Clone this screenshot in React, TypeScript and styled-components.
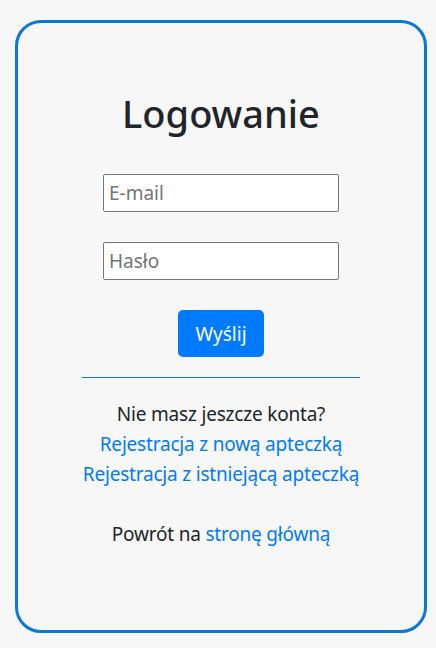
import * as React from 'react';
import styled, { createGlobalStyle } from 'styled-components';

const GlobalStyle = createGlobalStyle`
    html, body {
        margin: 0;
        padding: 0;
        background: #f7f7f7;
    }
    body {
        font-family: "Noto Sans", "Open Sans", sans-serif;
        color: #212529;
    }
`;

const Page = styled.div`
    padding: 20px 9px 15px 15px;
`;

const Card = styled.div`
    box-sizing: border-box;
    height: 613px;
    border: 3px solid #0a78d8;
    border-radius: 26px;
    background: #f7f7f7;
    display: flex;
    flex-direction: column;
    align-items: center;
    padding-top: 67px;
`;

const Title = styled.h1`
    margin: 0 0 38px;
    font-size: 38px;
    line-height: 46px;
    font-weight: 500;
    color: #212529;
`;

const Form = styled.form`
    display: flex;
    flex-direction: column;
    align-items: center;
    gap: 30px;
`;

const Input = styled.input`
    box-sizing: border-box;
    width: 236px;
    height: 38px;
    padding: 0 5px;
    border: 1px solid #767676;
    border-radius: 2px;
    background: #fff;
    font-family: inherit;
    font-size: 19px;
    color: #212529;

    &::placeholder {
        color: #757575;
    }
`;

const Button = styled.button`
    box-sizing: border-box;
    height: 47px;
    padding: 0 17px;
    border: none;
    border-radius: 5px;
    background: #007bff;
    color: #fff;
    font-family: inherit;
    font-size: 19px;
    cursor: pointer;
`;

const Divider = styled.div`
    width: 278px;
    height: 1px;
    margin: 20px 0 21px;
    background: #1f74c4;
`;

const Links = styled.div`
    display: flex;
    flex-direction: column;
    align-items: center;
    font-size: 19px;
    letter-spacing: -0.2px;
    line-height: 30px;
`;

const Line = styled.div<{ spaced?: boolean }>`
    margin-top: ${props => (props.spaced ? '30px' : '0')};
`;

const Link = styled.a`
    color: #007bff;
    text-decoration: none;
`;

export default function App() {
    return (
        <Page>
            <GlobalStyle />
            <Card>
                <Title>Logowanie</Title>
                <Form onSubmit={e => e.preventDefault()}>
                    <Input type="email" placeholder="E-mail" />
                    <Input type="password" placeholder="Hasło" />
                    <Button type="submit">Wyślij</Button>
                </Form>
                <Divider />
                <Links>
                    <Line>Nie masz jeszcze konta?</Line>
                    <Line><Link href="#">Rejestracja z nową apteczką</Link></Line>
                    <Line><Link href="#">Rejestracja z istniejącą apteczką</Link></Line>
                    <Line spaced>Powrót na <Link href="#">stronę główną</Link></Line>
                </Links>
            </Card>
        </Page>
    );
}
